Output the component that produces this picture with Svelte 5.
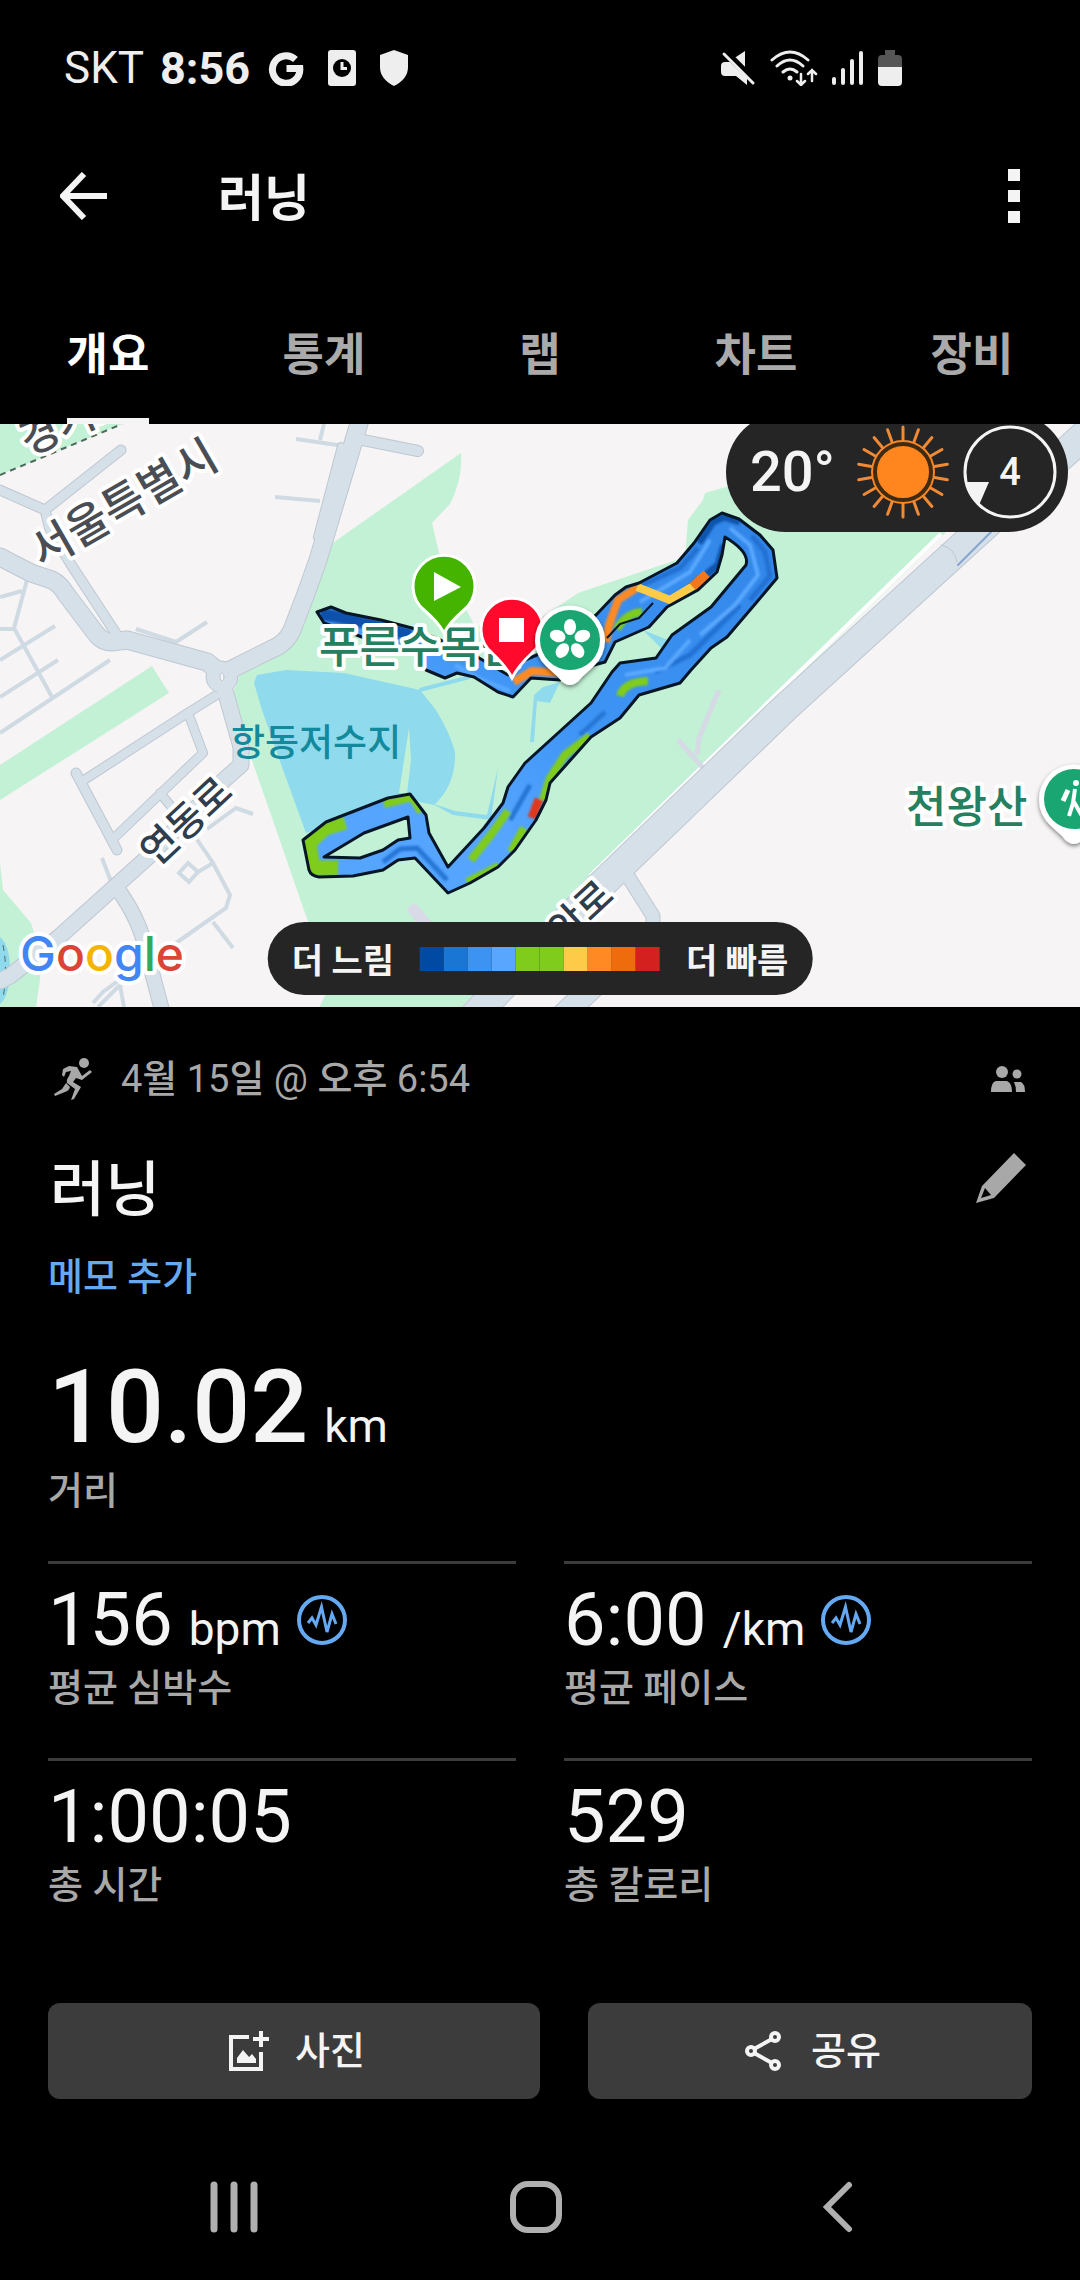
<script lang="ts">
	interface Stat {
		value: string;
		unit?: string;
		label: string;
	}

	const tabs = ['개요', '통계', '랩', '차트', '장비'];
	let active = $state('개요');

	const stats: Stat[] = [
		{ value: '156', unit: 'bpm', label: '평균 심박수' },
		{ value: '6:00', unit: '/km', label: '평균 페이스' },
		{ value: '1:00:05', label: '총 시간' },
		{ value: '529', label: '총 칼로리' }
	];

	const paceColors = [
		'#004aa3',
		'#1976d2',
		'#3d93f2',
		'#58a6ff',
		'#7fcc1c',
		'#7fcc1c',
		'#fdcb48',
		'#ff8a24',
		'#ee6c0c',
		'#d52020'
	];

	const rays = Array.from({ length: 18 }, (_, i) => i * 20);
	const petals = [0, 72, 144, 216, 288];

	// roads drawn twice: darker casing first, then the lighter surface
	const roads = [
		{ w: 9, d: 'M0 490L45 510L121 450M45 510L50 530L70 563L117 635' },
		{ w: 10, d: 'M363 440L418 451' },
		{ w: 6, d: 'M341 446L317 537' },
		{ w: 8, d: 'M215 696L186 714L81 782M188 713L203 753L114 838M160 793L174 810' },
		{ w: 9, d: 'M76 773L117 850' },
		{ w: 13, d: 'M629 878L653 916V935' },
		{ w: 14, d: 'M117 888Q140 920 146 950L162 1010' },
		{ w: 15, d: 'M222 680L241 747V765L224 780L148 857L59 937L10 976L0 981' },
		{ w: 17, d: 'M0 557L31 573L52 580Q60 584 66 594L97 635Q103 642 112 642L127 640L207 662L222 674L270 650Q286 644 292 630Q306 595 318 560L360 420' },
		{ w: 28, d: 'M1090 430L786 707L600 886L470 1020' },
		{ w: 22, d: 'M560 1018L600 980' }
	];

	const lanes =
		'M296 439L344 446M324 424L320 440M275 497L320 501M136 629L176 642L207 622M27 580L14 628L52 697M0 597L22 591M0 629H14M0 660L55 626M0 697L58 660M0 733L110 660M207 829L236 808L253 814M196 838L213 863L230 895L226 908L176 943M213 922L233 948M179 873L188 863L198 872L189 882ZM198 872L213 863M102 858L112 884M93 1003L103 992L122 978M98 1007L120 985M120 985L124 1007';

	const route =
		'M596 615L615 595L626 587L639 583L677 563L694 543L710 520L722 513L739 519L760 535L773 550L777 578L756 603L727 637L711 648L691 670L680 683L639 695L620 718L591 737L550 783L546 800L536 820L515 850L498 867L470 883L448 893L415 858L398 860L383 870L353 876L319 877Q311 876 309 870L303 840L326 822L388 798L410 794L426 815L429 833L448 867L484 828L503 803L508 787L525 763L591 703L612 672L620 663L656 658L672 635L711 607L746 565Q750 552 725 537L722 555L717 572L698 590L667 607L649 627L615 642L605 662L594 665L560 680L531 678L513 697L498 692L474 677L457 673L445 678L426 670L412 650L370 640L324 623L317 612L331 607L346 613L381 620L412 628L440 640L474 655L508 675L525 660L560 645ZM324 857L364 833L408 817L410 838L398 840L383 850L360 858Z';
</script>

<svelte:head>
	<title>러닝</title>
</svelte:head>

{#snippet pulse()}
	<svg class="pulse" viewBox="0 0 50 50" aria-hidden="true">
		<circle cx="25" cy="25" r="23" fill="none" stroke="#64a9f2" stroke-width="4" />
		<path
			d="M11 28L15 23L19 30L24.500 12L30 37L35 19L39 29"
			fill="none"
			stroke="#64a9f2"
			stroke-width="3"
		/>
	</svg>
{/snippet}

<main lang="ko">
	<div class="status">
		<span class="carrier">SKT</span>
		<span class="clock">8:56</span>
		<svg width="36" height="36" viewBox="0 0 36 36" aria-hidden="true">
			<path d="M27.500 9.500A13.700 13.700 0 1 0 31.800 18.500H18.500" fill="none" stroke="#eee" stroke-width="7" />
		</svg>
		<svg width="28" height="36" viewBox="0 0 28 36" aria-hidden="true">
			<rect width="28" height="36" rx="3" fill="#eee" />
			<circle cx="14" cy="18" r="9" />
			<path d="M14 12V18.500H19" fill="none" stroke="#eee" stroke-width="3" />
		</svg>
		<svg width="28" height="36" viewBox="0 0 28 36" aria-hidden="true">
			<path d="M14 0L28 5V17Q28 29 14 36Q0 29 0 17V5Z" fill="#eee" />
		</svg>
		<div class="signals">
			<svg width="36" height="36" viewBox="0 0 36 36" aria-hidden="true">
				<path d="M1 16Q1 12 5 12H10L27 28V35L16 26H5Q1 26 1 22ZM13 9L25 1V20Z" fill="#eee" />
				<path d="M4 4L33 33" stroke="#000" stroke-width="6" transform="translate(2 -2)" />
				<path d="M4 4L33 33" stroke="#eee" stroke-width="3" stroke-linecap="round" />
			</svg>
			<svg width="48" height="36" viewBox="0 0 48 36" aria-hidden="true">
				<g fill="none" stroke="#eee" stroke-width="3" stroke-linecap="round">
					<path d="M2 10Q20 -6 38 10M7 16Q20 4 33 16M13 22Q20 16 27 22" />
					<path d="M31 24V34M27 31L31 35L35 31M42 31V20M38 24L42 20L46 24" stroke-width="2.500" />
				</g>
				<circle cx="20" cy="28" r="2.500" fill="#eee" />
			</svg>
			<svg width="32" height="36" viewBox="0 0 32 36" aria-hidden="true">
				<path
					d="M2 29V33M11 20V33M20 11V33M29 3V33"
					stroke="#eee"
					stroke-width="4"
					stroke-linecap="round"
				/>
			</svg>
			<svg width="24" height="36" viewBox="0 0 24 36" aria-hidden="true">
				<path d="M7 0H17V5H20Q24 5 24 9V17H0V9Q0 5 4 5H7Z" fill="#555" />
				<path d="M0 17H24V32Q24 36 20 36H4Q0 36 0 32Z" fill="#eee" />
			</svg>
		</div>
	</div>

	<header>
		<button class="icon" aria-label="뒤로">
			<svg width="48" height="48" viewBox="0 0 48 48">
				<path d="M24 2L3 24L24 46M4 24H47" fill="none" stroke="#f4f4f4" stroke-width="6" />
			</svg>
		</button>
		<h1>러닝</h1>
		<button class="icon" aria-label="더보기">
			<svg width="12" height="54" viewBox="0 0 12 54">
				<path d="M0 0H12V12H0ZM0 21H12V33H0ZM0 42H12V54H0Z" fill="#f4f4f4" />
			</svg>
		</button>
	</header>

	<nav class="tabs" role="tablist">
		{#each tabs as tab}
			<button role="tab" aria-selected={tab === active} onclick={() => (active = tab)}>
				<span>{tab}</span>
			</button>
		{/each}
	</nav>

	<div class="map">
		<svg viewBox="0 424 1080 583" preserveAspectRatio="xMidYMid slice" role="img" aria-label="지도">
			<defs>
				<linearGradient id="pace" x1="1" y1="0" x2="0" y2="1">
					<stop offset="0" stop-color="#2f84e6" />
					<stop offset="0.500" stop-color="#3f95f5" />
					<stop offset="0.700" stop-color="#55a5ff" />
				</linearGradient>
				<clipPath id="track">
					<path d={route} clip-rule="evenodd" />
				</clipPath>
				<filter id="blend" x="-5%" y="-5%" width="110%" height="110%">
					<feGaussianBlur stdDeviation="1" />
				</filter>
				<filter id="shadow" x="-30%" y="-30%" width="160%" height="160%">
					<feDropShadow dx="0" dy="2" stdDeviation="2" flood-opacity="0.500" />
				</filter>
			</defs>
			<rect y="424" width="1080" height="583" fill="#f6f4f5" />

			<g fill="#c3f1d5">
				<path d="M461 453Q463 478 450 504L432 523L439 553L474 625L520 632L578 593L685 557L688 520L703 500L705 493L726 487L780 470H1010L941 537L753 721L595 877L458 1010H318L330 985L238 720L234 690L241 673L286 647L327 547Z" />
				<path d="M152 666L169 693L0 800V765Z" />
				<path d="M0 424H122L0 475Z" />
				<path d="M0 863L3 890L31 923Q42 955 40 980L36 1007H0Z" />
			</g>
			<g fill="#90daee">
				<path d="M254 683L257 675L286 670L344 673L420 690L436 710Q450 733 455 752Q456 785 434 805L410 800L306 833L282 767L262 710Z" />
				<path d="M419 688L470 675V679L420 692ZM543 687L560 682L550 703L537 701L534 742H530L534 695ZM431 803L455 811L487 815L498 768L491 820L453 815ZM643 630L668 640L661 648Z" />
				<path d="M0 937Q10 945 10 970Q10 995 0 1004Z" />
			</g>
			<path d="M409 728L411 760L407 793H399Z" fill="#c3f1d5" />
			<path d="M0 475L122 424" fill="none" stroke="#4d6a5c" stroke-width="2" stroke-dasharray="6 5" />
			<path d="M3 945Q8 970 3 998" fill="none" stroke="#4d6a5c" stroke-dasharray="6 5" />
			<path d="M941 534L590 876" stroke="#fff" stroke-width="4" />

			<path d={lanes} fill="none" stroke="#cfdae3" stroke-width="4" />
			<path
				d="M678 740L706 771M719 690L699 738L697 755"
				fill="none"
				stroke="#d5dae4"
				stroke-width="5"
			/>
			<path d="M414 910L440 942" stroke="#d9dae8" stroke-width="12" stroke-linecap="round" />
			<g fill="none" stroke-linecap="round" stroke-linejoin="round">
				{#each roads as road}
					<path d={road.d} stroke="#bfc8d2" stroke-width={road.w + 2} />
				{/each}
				<circle cx="222" cy="677" r="16" fill="#d6e0e8" stroke="#bfc8d2" />
				{#each roads as road}
					<path d={road.d} stroke="#d6e0e8" stroke-width={road.w} />
				{/each}
				<ellipse cx="222" cy="677" rx="2" ry="4" fill="#f6f4f5" stroke="#bfc8d2" />
				<path d="M991 532L958 565" stroke="#86a4cf" stroke-width="2" />
				<path d="M941 545Q955 548 957 562" stroke="#bfc8d2" />
			</g>

			<!-- running track coloured by pace -->
			<g clip-path="url(#track)">
				<rect x="300" y="500" width="480" height="400" fill="url(#pace)" />
				<g fill="none" stroke-linejoin="round" filter="url(#blend)">
					<path d="M320 614L345 618L411 635" stroke="#0c51ac" stroke-width="12" />
					<path d="M699 543L713 522L724 517L740 522M724 545L718 565L702 578L690 588" stroke="#0f55ad" stroke-width="7" />
					<path d="M640 586L680 568L698 548M752 536L765 552L770 576L750 600M655 672L690 655L740 605" stroke="#2071d2" stroke-width="5" />
					<path d="M730 528L750 545L758 575L735 605L700 635M640 602L690 572L710 540M625 675L665 668L690 640M455 665L480 679L510 691" stroke="#5aa9ff" stroke-width="4" />
					<path d="M383 862L400 849L417 848L447 880M605 712L580 735M530 785L510 820" stroke="#2676d6" stroke-width="5" />
					<path d="M617 629Q626 613 642 612M620 696Q624 682 648 681M590 736L565 755L550 778L543 800M508 811L490 836L471 860M524 828L511 852M499 866L467 882M384 804L412 797L421 812" stroke="#7fcc1c" stroke-width="8" />
					<path d="M345 822L325 828L309 843L313 868L338 868" stroke="#7fcc1c" stroke-width="15" />
					<path d="M539 799L532 818" stroke="#e0371c" stroke-width="9" />
					<path d="M606 642L609 625L618 600L638 587" stroke="#ff8a24" stroke-width="8" />
					<path d="M514 682L532 671L562 673" stroke="#ff8a24" stroke-width="8" />
				</g>
				<path d="M637 587L670 600L695 585" fill="none" stroke="#fdcb48" stroke-width="8" />
				<path d="M693 587L707 574" stroke="#f2761b" stroke-width="10" />
			</g>
			<g fill="none" stroke="#061626" stroke-linejoin="round">
				<path d={route} stroke-width="3" />
				<path d="M607 638L620 624L639 618L653 603" stroke-width="2" />
			</g>

			<g class="place">
				<text x="319" y="663" font-size="44" fill="#24805e">푸른수목원</text>
				<text x="231" y="756" font-size="37" fill="#138a9c" stroke="none">항동저수지</text>
				<text x="906" y="823" font-size="44" fill="#24805e">천왕산</text>
				<text transform="translate(42 569) rotate(-30)" font-size="45" fill="#4a4e54">서울특별시</text>
				<text transform="translate(28 456) rotate(-24)" font-size="42" fill="#4a4e54">경기도</text>
				<text transform="translate(156 868) rotate(-43)" font-size="39" fill="#2f3d4c">연동로</text>
				<text transform="translate(616 898) rotate(-43)" font-size="39" fill="#2f3d4c" text-anchor="end">안로</text>
			</g>

			<g stroke="#fff" stroke-width="3">
				<path d="M444 633Q438 622 424 610A31 31 0 1 1 464 610Q450 622 444 633Z" fill="#44b400" />
				<path d="M512 678Q506 666 492 653A31 31 0 1 1 532 653Q518 666 512 678Z" fill="#ff0a2c" />
			</g>
			<path d="M434 572L461 587L434 601Z" fill="#fff" />
			<rect x="499" y="618" width="25" height="24" fill="#fff" />

			<g filter="url(#shadow)">
				<path d="M570 685Q564 685 558 677L546 666A35 35 0 1 1 594 666L582 677Q576 685 570 685Z" fill="#fff" />
				<path d="M1074 844Q1068 844 1062 836L1050 825A35 35 0 1 1 1098 825L1086 836Q1080 844 1074 844Z" fill="#fff" />
			</g>
			<circle cx="570" cy="640" r="30" fill="#1aa672" />
			{#each petals as angle}
				<ellipse cx="570" cy="627" rx="6" ry="8" fill="#fff" transform="rotate({angle} 570 640)" />
			{/each}
			<circle cx="1074" cy="799" r="30" fill="#1aa672" />
			<g stroke="#fff" fill="none" stroke-width="4">
				<circle cx="1076" cy="783" r="3" fill="#fff" stroke="none" />
				<path d="M1068 790L1063 801" stroke-width="5" />
				<path d="M1075 789L1073 803L1069 816M1074 802L1082 816" />
			</g>

			<text class="google" x="20" y="971">
				<tspan fill="#4285f4">G</tspan><tspan fill="#db4437">o</tspan><tspan fill="#f4b400">o</tspan><tspan fill="#4285f4">g</tspan><tspan fill="#34a853">l</tspan><tspan fill="#db4437">e</tspan>
			</text>
		</svg>

		<div class="weather">
			<span>20°</span>
			<svg width="96" height="96" viewBox="-48 -48 96 96" aria-hidden="true">
				<circle r="32" fill="#ff861f" />
				<circle r="28" fill="none" stroke="#3f2a12" stroke-width="4" />
				{#each rays as angle}
					<path
						d="M0 -32V-45"
						stroke="#f08a35"
						stroke-width="3"
						stroke-linecap="round"
						transform="rotate({angle})"
					/>
				{/each}
			</svg>
			<div class="wind">
				<svg viewBox="-48 -48 96 96" aria-hidden="true">
					<circle r="45" fill="none" stroke="#f4f4f4" stroke-width="3" />
					<path d="M-44 10H-21L-31 33Q-41 25 -44 10Z" fill="#f4f4f4" />
				</svg>
				<span>4</span>
			</div>
		</div>

		<div class="legend">
			<span>더 느림</span>
			<div class="scale">
				{#each paceColors as color}
					<i style="background: {color}"></i>
				{/each}
			</div>
			<span>더 빠름</span>
		</div>
	</div>

	<section>
		<div class="meta">
			<svg width="39" height="42" viewBox="0 0 39 42" aria-hidden="true">
				<circle cx="30" cy="5" r="5" fill="#a8a8a8" />
				<path
					d="M9 11L15 8L23 9L28 18L36 12L38 14L28 22L25 21L22 20L19 24L27 29L20 41L17 42L21 31L13 25Q12 22 15 18L17 13L12 14L10 19L8 17ZM12 25L16 29Q15 33 11 34L1 38L0 36L8 31Z"
					fill="#a8a8a8"
				/>
			</svg>
			<span>4<b>월</b> 15<b>일</b> @ <b>오후</b> 6:54</span>
			<svg class="people" width="36" height="26" viewBox="0 0 36 26" aria-label="공개 범위">
				<circle cx="12" cy="6" r="6" fill="#a8a8a8" />
				<circle cx="27" cy="8" r="4.500" fill="#a8a8a8" />
				<path d="M1 26Q1 16 6 15H17Q22 17 22 26ZM24 16H31Q35 18 35 26H26Q26 20 24 16Z" fill="#a8a8a8" />
			</svg>
		</div>

		<div class="title">
			<h2>러닝</h2>
			<button class="icon" aria-label="이름 편집">
				<svg width="50" height="50" viewBox="0 0 50 50">
					<path
						d="M38 0L50 12L18 45L0 50L6 33ZM9 35L5 45L15 42Z"
						fill="#a8a8a8"
						fill-rule="evenodd"
					/>
				</svg>
			</button>
		</div>
		<a href="#memo">메모 추가</a>

		<div class="distance">
			<div class="value">
				<span>10.02</span>
				<small>km</small>
			</div>
			<div class="label">거리</div>
		</div>

		<div class="stats">
			{#each stats as stat}
				<div class="stat">
					<div class="value">
						<span>{stat.value}</span>
						{#if stat.unit}
							<small>{stat.unit}</small>
							{@render pulse()}
						{/if}
					</div>
					<div class="label">{stat.label}</div>
				</div>
			{/each}
		</div>

		<div class="actions">
			<button class="photo">
				<svg width="48" height="48" viewBox="0 0 48 48" aria-hidden="true">
					<path d="M26 10H8V42H38V25" fill="none" stroke="#f4f4f4" stroke-width="4" />
					<path d="M38 4V20M30 12H46" stroke="#f4f4f4" stroke-width="4" />
					<path d="M14 36V31L20 23L26 30L29 27L33 32V36Z" fill="#f4f4f4" />
				</svg>
				사진
			</button>
			<button class="share">
				<svg width="48" height="48" viewBox="0 0 48 48" aria-hidden="true">
					<g fill="none" stroke="#f4f4f4" stroke-width="4">
						<circle cx="12" cy="24" r="4" />
						<circle cx="36" cy="10" r="4" />
						<circle cx="36" cy="38" r="4" />
						<path d="M15 22L33 12M15 26L33 36" />
					</g>
				</svg>
				공유
			</button>
		</div>
	</section>

	<footer>
		<button aria-label="최근 앱">
			<svg width="56" height="56" viewBox="0 0 56 56">
				<path
					d="M8 6V50M28 6V50M48 6V50"
					stroke="#b0b0b0"
					stroke-width="7"
					stroke-linecap="round"
				/>
			</svg>
		</button>
		<button aria-label="홈">
			<svg width="56" height="56" viewBox="0 0 56 56">
				<rect x="5" y="5" width="46" height="46" rx="15" fill="none" stroke="#b0b0b0" stroke-width="6" />
			</svg>
		</button>
		<button aria-label="이전">
			<svg width="56" height="56" viewBox="0 0 56 56">
				<path
					d="M39 6L17 28L39 50"
					fill="none"
					stroke="#b0b0b0"
					stroke-width="6"
					stroke-linecap="round"
				/>
			</svg>
		</button>
	</footer>
</main>

<style>
	:global(body) {
		margin: 0;
		background: #000;
	}

	main {
		display: flex;
		flex-direction: column;
		min-height: 100vh;
		background: #000;
		color: #f4f4f4;
		font-family: Roboto, 'Noto Sans CJK KR', sans-serif;
	}

	svg {
		display: block;
		flex-shrink: 0;
	}

	button {
		padding: 0;
		border: 0;
		background: none;
		color: inherit;
		font: inherit;
	}

	.icon {
		display: flex;
	}

	.status {
		display: flex;
		align-items: center;
		height: 136px;
		padding: 0 178px 0 64px;
		gap: 24px;
		font-size: 44px;
		color: #eee;
	}

	.carrier {
		margin-right: -8px;
	}

	.clock {
		margin-right: -6px;
		font-size: 45px;
		font-weight: 700;
	}

	.signals {
		display: flex;
		gap: 14px;
		margin-left: auto;
	}

	header {
		display: flex;
		align-items: center;
		height: 120px;
		padding: 0 60px;
	}

	h1 {
		flex: 1;
		margin: 0 0 0 110px;
		padding-bottom: 4px;
		font-size: 50px;
		font-weight: 700;
	}

	.tabs {
		display: grid;
		grid-template-columns: repeat(5, 1fr);
		height: 168px;
	}

	.tabs button {
		display: flex;
		justify-content: center;
		align-items: flex-end;
		color: #aaa;
		font-size: 45px;
		font-weight: 700;
		line-height: 48px;
	}

	.tabs span {
		padding-bottom: 38px;
		border-bottom: 6px solid transparent;
	}

	.tabs [aria-selected='true'] {
		color: #fff;
	}

	.tabs [aria-selected='true'] span {
		border-color: #f4f4f4;
	}

	.map {
		position: relative;
		height: 583px;
		overflow: hidden;
	}

	.map > svg {
		width: 100%;
		height: 100%;
	}

	.place {
		font-weight: 500;
		stroke: #fff;
		stroke-width: 8px;
		stroke-linejoin: round;
		paint-order: stroke;
	}

	.google {
		font-family: Inter, sans-serif;
		font-size: 48px;
		font-weight: 500;
		stroke: #fff;
		stroke-width: 8px;
		stroke-linejoin: round;
		paint-order: stroke;
	}

	.weather {
		position: absolute;
		top: -12px;
		right: 12px;
		display: flex;
		align-items: center;
		height: 120px;
		padding: 0 10px 0 24px;
		border-radius: 60px;
		background: #252525;
		font-size: 56px;
		font-weight: 500;
	}

	.weather > svg {
		margin: 0 11px 0 20px;
	}

	.wind {
		display: grid;
		place-items: center;
		width: 96px;
		height: 96px;
		font-size: 38px;
	}

	.wind > * {
		grid-area: 1 / 1;
	}

	.wind svg {
		width: 96px;
		height: 96px;
	}

	.legend {
		position: absolute;
		bottom: 12px;
		left: 50%;
		display: flex;
		align-items: center;
		gap: 26px;
		height: 73px;
		padding: 0 24px;
		border-radius: 37px;
		background: #252525;
		font-size: 34px;
		font-weight: 700;
		white-space: nowrap;
		transform: translateX(-50%);
	}

	.scale {
		display: flex;
	}

	.scale i {
		width: 24px;
		height: 24px;
	}

	section {
		padding: 48px 48px 0;
		font-size: 38px;
		line-height: 48px;
	}

	.meta {
		display: flex;
		align-items: center;
		gap: 28px;
		padding: 0 6px;
		color: #a8a8a8;
	}

	.meta b {
		font-weight: 500;
	}

	.people {
		margin-left: auto;
	}

	.title {
		display: flex;
		justify-content: space-between;
		align-items: flex-start;
		margin: 50px 0 24px;
		padding: 0 6px 0 2px;
	}

	h2 {
		margin: 0;
		font-size: 60px;
		font-weight: 500;
		line-height: 76px;
	}

	a {
		display: block;
		width: fit-content;
		color: #64a9f2;
		font-weight: 500;
		text-decoration: none;
	}

	.value {
		display: flex;
		align-items: baseline;
		gap: 16px;
	}

	.distance {
		margin: 46px 0;
	}

	.distance .value {
		font-size: 102px;
		font-weight: 500;
		line-height: 120px;
	}

	.value small {
		font-size: 46px;
		font-weight: 400;
		line-height: 48px;
	}

	.label {
		color: #a8a8a8;
		font-weight: 500;
	}

	.stats {
		display: grid;
		grid-template-columns: 1fr 1fr;
		gap: 46px 48px;
	}

	.stat {
		padding-top: 12px;
		border-top: 3px solid #3c3c3c;
	}

	.stat .value {
		font-size: 74px;
		line-height: 88px;
	}

	.pulse {
		align-self: center;
		width: 50px;
		height: 50px;
	}

	.actions {
		display: flex;
		gap: 48px;
		margin-top: 94px;
	}

	.actions button {
		display: flex;
		justify-content: center;
		align-items: center;
		gap: 24px;
		height: 96px;
		border-radius: 12px;
		background: #3c3c3c;
		font-weight: 500;
	}

	.photo {
		flex: 41;
	}

	.share {
		flex: 37;
	}

	footer {
		display: flex;
		justify-content: center;
		gap: 246px;
		padding: 80px 8px 44px 0;
	}
</style>
